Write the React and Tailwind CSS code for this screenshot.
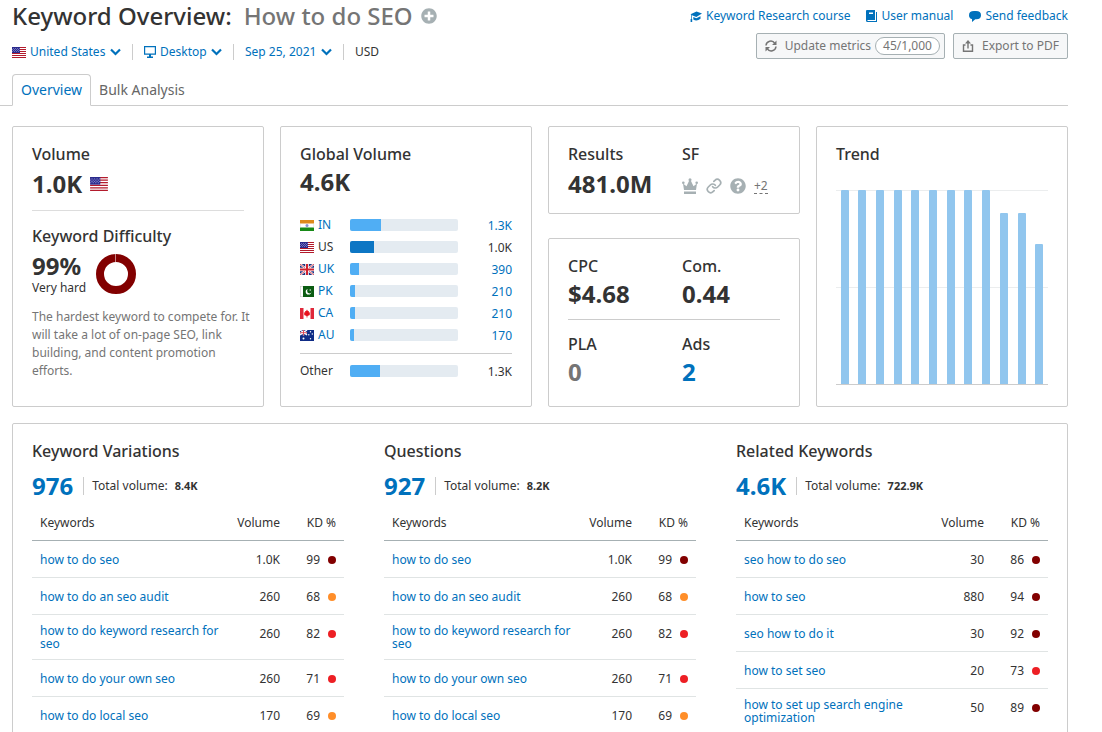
import React from 'react';
import { FaPlusCircle, FaQuestionCircle } from 'react-icons/fa';
import { Link as LinkIcon } from 'lucide-react';

/* Flags, all drawn on a 14 x 11 grid */
const FlagUS = () => (
  <>
    <rect width="14" height="11" fill="#fff" />
    <path d="M0 .5h14M0 2.5h14M0 4.5h14M0 6.5h14M0 8.5h14M0 10.5h14" stroke="#b31b2c" />
    <rect width="8" height="6" fill="#2a2a8c" />
    <path d="M1 1.5h7M0 2.5h7M1 3.5h7M0 4.5h7" stroke="#8f8fd0" strokeWidth=".7" strokeDasharray="1 1" />
  </>
);

const FlagIN = () => (
  <>
    <rect width="14" height="11" fill="#fff" />
    <rect width="14" height="3.5" fill="#dd8a1c" />
    <rect y="7.5" width="14" height="3.5" fill="#178a17" />
    <path d="M.25 3.5v4M13.75 3.5v4" stroke="#ccc" strokeWidth=".5" />
    <circle cx="7" cy="5.5" r="1.5" fill="#8a93cf" />
  </>
);

const FlagUK = () => (
  <>
    <rect width="14" height="11" fill="#1f3480" />
    <path d="M0 0l14 11M14 0L0 11" stroke="#fff" strokeWidth="2" />
    <path d="M0 0l14 11M14 0L0 11" stroke="#d0212f" strokeWidth=".8" />
    <path d="M7 0v11M0 5.5h14" stroke="#fff" strokeWidth="3.6" />
    <path d="M7 0v11M0 5.5h14" stroke="#d0212f" strokeWidth="2" />
  </>
);

const FlagPK = () => (
  <>
    <rect width="14" height="11" fill="#0b5c12" />
    <rect width="3" height="11" fill="#fff" />
    <path d="M0 .3h3M0 10.7h3M.3 0v11" stroke="#bbb" strokeWidth=".6" />
    <circle cx="8.5" cy="5.7" r="2.8" fill="#fff" />
    <circle cx="9.5" cy="5" r="2.4" fill="#0b5c12" />
    <circle cx="10.2" cy="4" r=".7" fill="#fff" />
  </>
);

const FlagCA = () => (
  <>
    <rect width="14" height="11" fill="#fff" />
    <rect width="3.5" height="11" fill="#e0283a" />
    <rect x="10.5" width="3.5" height="11" fill="#e0283a" />
    <path d="M7 1.5l1 1.7 1-.3-.2 1.6 1.4-.1-.6 1.6.3.9-2.5 1v1.6h-.8V7.9l-2.5-1 .3-.9-.6-1.6 1.4.1L5 2.9l1 .3z" fill="#e8101c" />
  </>
);

const FlagAU = () => (
  <>
    <rect width="14" height="11" fill="#0f2c86" />
    <path d="M0 0l7 5M7 0L0 5M3.5 0v5.5M0 2.7h7" stroke="#fff" strokeWidth="1.4" />
    <path d="M3.5 0v5.5M0 2.7h7" stroke="#d8404e" strokeWidth=".9" />
    <g fill="#fff">
      <circle cx="3.5" cy="8.5" r="1" />
      <circle cx="10.5" cy="1.8" r=".7" />
      <circle cx="8.8" cy="4.7" r=".7" />
      <circle cx="12.3" cy="4" r=".7" />
      <circle cx="10.5" cy="8.8" r=".7" />
    </g>
  </>
);

const flags = { US: FlagUS, IN: FlagIN, UK: FlagUK, PK: FlagPK, CA: FlagCA, AU: FlagAU };

const Flag = ({ code, className = 'w-[14px] h-[11px]' }) => {
  const Shape = flags[code];
  return (
    <svg viewBox="0 0 14 11" className={`shrink-0 ${className}`} aria-hidden="true">
      <Shape />
    </svg>
  );
};

const Chevron = () => (
  <svg viewBox="0 0 11 8" className="w-[11px] h-2 ml-1 pointer-events-none" aria-hidden="true">
    <path d="M1 1.5L5.5 6 10 1.5" fill="none" stroke="#0071bc" strokeWidth="2.2" />
  </svg>
);

const Divider = () => <span className="w-px h-4 bg-[#ccc] mx-[11px]"></span>;

const Filter = ({ label, icon, value }) => (
  <span className="flex items-center text-[#0071bc]">
    {icon}
    <select aria-label={label} className="appearance-none bg-transparent cursor-pointer leading-4" defaultValue={value}>
      <option>{value}</option>
    </select>
    <Chevron />
  </span>
);

const TopLinks = () => (
  <nav className="flex items-center gap-4 h-8 text-xs text-[#0071bc]">
    <a href="#course" className="flex items-center gap-1">
      <svg viewBox="0 0 12 12" className="w-3 h-3" aria-hidden="true" fill="#0071bc">
        <path d="M12 3.6L6.500 1.500.5 4.200l.8.500v4.300H.600V12h1.600V9H2V5.200l4.300 1.900z" />
        <path d="M3.300 7l3 1.300 4.200-2.100v2.600Q6.700 11.800 3.300 9.500z" />
      </svg>
      Keyword Research course
    </a>
    <a href="#manual" className="flex items-center gap-1">
      <svg viewBox="0 0 11 12" className="w-[11px] h-3" aria-hidden="true">
        <path d="M1 0h8v10H1.5v1H10V2h1v10H1.5Q0 12 0 10.500V1Q0 0 1 0z" fill="#0071bc" />
        <path d="M3 2.5h4V4H3z" fill="#fff" />
      </svg>
      User manual
    </a>
    <a href="#feedback" className="flex items-center gap-1">
      <svg viewBox="0 0 12 12" className="w-3 h-3" aria-hidden="true">
        <path d="M5 1h2q5 0 5 4.200T7 9.200H6.300L3 12V9Q0 8.500 0 5.200 0 1 5 1z" fill="#0071bc" />
      </svg>
      Send feedback
    </a>
  </nav>
);

const Header = () => (
  <header className="flex justify-between pl-3 pr-[34px]">
    <div>
      <h1 className="flex items-center h-8 text-2xl leading-8 font-medium text-[#333]">
        Keyword Overview:
        <span className="ml-3 text-[#757575]">How to do SEO</span>
        <button type="button" aria-label="Add to list" className="ml-2 text-[#a6b0b3]">
          <FaPlusCircle className="w-4 h-4" />
        </button>
      </h1>
      <div className="flex items-center h-5 mt-[10px] text-xs text-[#333]">
        <Filter label="Country" value="United States" icon={<Flag code="US" className="w-[14px] h-[11px] mr-1" />} />
        <Divider />
        <Filter
          label="Device"
          value="Desktop"
          icon={
            <svg viewBox="0 0 12 12" className="w-3 h-3 mr-1" aria-hidden="true">
              <path d="M.6.6h10.8v7.600H.6z" fill="none" stroke="#0071bc" strokeWidth="1.200" />
              <path d="M5 8h2v2.500h2V12H3v-1.500h2z" fill="#0071bc" />
            </svg>
          }
        />
        <Divider />
        <Filter label="Date" value="Sep 25, 2021" />
        <Divider />
        <span>USD</span>
      </div>
    </div>

    <div className="flex flex-col items-end">
      <TopLinks />
      <div className="flex gap-2 mt-px text-xs text-[#757575]">
        <button type="button" className="flex items-center h-[26px] pl-2 pr-1 rounded-xs border border-[#a6b0b3] bg-[#f6f7f8]">
          <svg viewBox="0 0 12 12" className="w-3 h-3 mr-2" aria-hidden="true">
            <path d="M1 5.5a4.800 4.800 0 0 1 8.800-2.200M11 6.5a4.800 4.800 0 0 1-8.800 2.200" fill="none" stroke="#757575" strokeWidth="1.5" />
            <path d="M11.5.5V5H7zM.5 11.500V7H5z" fill="#757575" />
          </svg>
          Update metrics
          <span className="flex items-center h-[18px] ml-1 px-[7px] rounded-full border border-[#a6b0b3] bg-white">45/1,000</span>
        </button>
        <button type="button" className="flex items-center h-[26px] px-2 rounded-xs border border-[#a6b0b3] bg-[#f6f7f8]">
          <svg viewBox="0 0 12 12" className="w-3 h-3 mr-2" aria-hidden="true">
            <path d="M3.5 5h-2v6.300h9V5h-2M6 8.500V2" fill="none" stroke="#757575" strokeWidth="1.400" />
            <path d="M6 0l3 3.500H3z" fill="#757575" />
          </svg>
          Export to PDF
        </button>
      </div>
    </div>
  </header>
);

const Tabs = () => (
  <div className="flex mt-3 mr-[34px]" role="tablist">
    <span className="w-3 border-b border-[#ccc]"></span>
    <button type="button" role="tab" aria-selected="true" className="h-8 px-2 rounded-t-sm border border-[#ccc] border-b-white text-sm text-[#0071bc]">
      Overview
    </button>
    <button type="button" role="tab" aria-selected="false" className="h-8 px-2 border-b border-[#ccc] text-sm text-[#666]">
      Bulk Analysis
    </button>
    <span className="flex-1 border-b border-[#ccc]"></span>
  </div>
);

const Card = ({ className = '', children }) => (
  <section className={`border border-[#ccc] rounded-xs px-[19px] pt-[18px] ${className}`}>{children}</section>
);

const Title = ({ children }) => <h2 className="text-base leading-[18px] font-medium text-[#333]">{children}</h2>;

const big = 'text-2xl leading-7 font-bold';

const VolumeCard = () => (
  <Card className="pb-6">
    <Title>Volume</Title>
    <div className="flex items-center gap-2 mt-[7px]">
      <span className={big}>1.0K</span>
      <Flag code="US" className="w-[18px] h-[14px]" />
    </div>
    <hr className="mt-3 mb-4 border-[#ddd]" />
    <Title>Keyword Difficulty</Title>
    <div className="flex items-center gap-[10px] mt-[7px]">
      <div>
        <div className={big}>99%</div>
        <div className="leading-4">Very hard</div>
      </div>
      <svg viewBox="0 0 40 40" className="w-10 h-10" aria-hidden="true">
        <circle cx="20" cy="20" r="16" fill="none" stroke="#820000" strokeWidth="8" />
        <path d="M19.500 0v8" stroke="#d9a9a9" strokeWidth=".8" />
      </svg>
    </div>
    <p className="mt-3 -mr-3 leading-[18px] text-[#757575]">
      The hardest keyword to compete for. It will take a lot of on-page SEO, link building, and content promotion efforts.
    </p>
  </Card>
);

const countries = [
  { code: 'IN', value: '1.3K', share: 29 },
  { code: 'US', value: '1.0K', share: 22, current: true },
  { code: 'UK', value: '390', share: 8 },
  { code: 'PK', value: '210', share: 5 },
  { code: 'CA', value: '210', share: 5 },
  { code: 'AU', value: '170', share: 4 },
];

const Bar = ({ share, current }) => (
  <span className="flex h-3 rounded-xs overflow-hidden bg-[#e4ebf1]">
    <span className={current ? 'bg-[#0d76c4]' : 'bg-[#50aef4]'} style={{ width: `${share}%` }}></span>
  </span>
);

const GlobalVolumeCard = () => (
  <Card>
    <Title>Global Volume</Title>
    <div className={`mt-[5px] ${big}`}>4.6K</div>
    <ul className="mt-[18px] text-[#0071bc]">
      {countries.map(({ code, value, share, current }) => (
        <li key={code} className={`grid grid-cols-[50px_1fr_54px] items-center h-[22px] ${current ? 'text-[#333]' : ''}`}>
          <span className="flex items-center gap-1">
            <Flag code={code} />
            {current ? <span>{code}</span> : <a href={`#${code}`}>{code}</a>}
          </span>
          <Bar share={share} current={current} />
          <span className="pt-0.5 text-right">{value}</span>
        </li>
      ))}
    </ul>
    <hr className="mt-[7px] border-[#ccc]" />
    <div className="grid grid-cols-[50px_1fr_54px] items-center h-[22px] mt-[6px]">
      <span>Other</span>
      <Bar share={28} />
      <span className="pt-0.5 text-right">1.3K</span>
    </div>
  </Card>
);

const Stat = ({ title, children }) => (
  <div>
    <Title>{title}</Title>
    {children}
  </div>
);

const CostCards = () => (
  <div className="flex flex-col gap-6">
    <Card className="grid grid-cols-[114px_1fr] pb-[15px]">
      <Stat title="Results">
        <div className={`mt-[7px] ${big}`}>481.0M</div>
      </Stat>
      <Stat title="SF">
        <div className="flex items-end gap-2 h-7 mt-[7px] pb-1 text-[#a6b0b3]">
          <svg viewBox="0 0 16 16" className="w-4 h-4" aria-hidden="true" fill="currentColor">
            <path d="M2 13.5h12V16H2zM2 12L1 5.5l3.500 2.800L7 3h2l2.500 5.300L15 5.500 14 12z" />
            <circle cx="8" cy="1.7" r="1.5" />
            <circle cx="1.3" cy="4.8" r="1.3" />
            <circle cx="14.7" cy="4.8" r="1.3" />
          </svg>
          <LinkIcon className="w-4 h-4" strokeWidth={2.5} />
          <FaQuestionCircle className="w-4 h-4" />
          <button type="button" className="leading-[14px] text-[#757575] border-b border-dashed border-[#757575]">+2</button>
        </div>
      </Stat>
    </Card>

    <Card className="flex-1 pb-5">
      <div className="grid grid-cols-[114px_1fr]">
        <Stat title="CPC">
          <div className={`mt-[5px] ${big}`}>$4.68</div>
        </Stat>
        <Stat title="Com.">
          <div className={`mt-[5px] ${big}`}>0.44</div>
        </Stat>
      </div>
      <hr className="mt-[11px] border-[#ccc]" />
      <div className="grid grid-cols-[114px_1fr] mt-[15px]">
        <Stat title="PLA">
          <div className={`mt-[5px] text-[#757575] ${big}`}>0</div>
        </Stat>
        <Stat title="Ads">
          <a href="#ads" className={`block mt-[5px] text-[#0071bc] ${big}`}>2</a>
        </Stat>
      </div>
    </Card>
  </div>
);

const trend = [194, 194, 194, 194, 194, 194, 194, 194, 194, 171, 171, 140];

const TrendCard = () => (
  <Card>
    <Title>Trend</Title>
    <svg viewBox="0 0 212 195" className="w-full mt-[27px]" role="img" aria-label="Monthly trend">
      <path d="M0 .5h212M0 97.5h212" stroke="#ebedee" />
      {trend.map((h, i) => {
        const x = Math.round(4.8 + i * 17.67);
        return <path key={i} d={`M${x} 194v${1 - h}q0-1 1-1h6q1 0 1 1v${h - 1}z`} fill="#91c6ee" />;
      })}
      <path d="M0 194.5h212" stroke="#ccc" />
    </svg>
  </Card>
);

const dark = 'bg-[#820000]';
const red = 'bg-[#ed1f24]';
const orange = 'bg-[#ff8e29]';

const variations = [
  ['how to do seo', '1.0K', 99, dark],
  ['how to do an seo audit', '260', 68, orange],
  ['how to do keyword research for seo', '260', 82, red],
  ['how to do your own seo', '260', 71, red],
  ['how to do local seo', '170', 69, orange],
];

const related = [
  ['seo how to do seo', '30', 86, dark],
  ['how to seo', '880', 94, dark],
  ['seo how to do it', '30', 92, dark],
  ['how to set seo', '20', 73, red],
  ['how to set up search engine optimization', '50', 89, dark],
];

const KeywordList = ({ title, count, total, rows }) => (
  <div>
    <Title>{title}</Title>
    <div className="flex items-center mt-3">
      <a href="#all" className={`text-[#0071bc] ${big}`}>{count}</a>
      <span className="w-px h-[18px] ml-[10px] mr-2 bg-[#ccc]"></span>
      <span>Total volume:</span>
      <b className="ml-[7px] text-[11px]">{total}</b>
    </div>
    <table className="table-fixed w-full mt-1 border-separate border-spacing-0 leading-[13px]">
      <thead>
        <tr className="h-[37px]">
          <th className="px-2 text-left font-normal border-b border-[#a6b0b3]">Keywords</th>
          <th className="w-[60px] px-2 text-right font-normal border-b border-[#a6b0b3]">Volume</th>
          <th className="w-[56px] px-2 text-right font-normal border-b border-[#a6b0b3] whitespace-nowrap">KD %</th>
        </tr>
      </thead>
      <tbody>
        {rows.map(([keyword, volume, kd, color]) => (
          <tr key={keyword} className="h-[37px]">
            <td className="px-2 py-[9px] border-b border-[#e0e4e4]">
              <a href="#keyword" className="text-[#0071bc]">{keyword}</a>
            </td>
            <td className="px-2 pt-3 align-top text-right border-b border-[#e0e4e4]">{volume}</td>
            <td className="px-2 pt-3 align-top border-b border-[#e0e4e4]">
              <span className="flex items-center justify-end gap-2">
                {kd}
                <span className={`w-2 h-2 rounded-full ${color}`}></span>
              </span>
            </td>
          </tr>
        ))}
      </tbody>
    </table>
  </div>
);

const App = () => {
  return (
    <div className="min-h-screen bg-white font-['Noto_Sans',sans-serif] text-xs text-[#333]">
      <Header />
      <Tabs />

      <main className="pl-3 pr-[34px] pt-5">
        {/* Metrics */}
        <div className="grid grid-cols-4 gap-4">
          <VolumeCard />
          <GlobalVolumeCard />
          <CostCards />
          <TrendCard />
        </div>

        {/* Keyword ideas */}
        <Card className="grid grid-cols-3 gap-10 mt-4 pb-5">
          <KeywordList title="Keyword Variations" count="976" total="8.4K" rows={variations} />
          <KeywordList title="Questions" count="927" total="8.2K" rows={variations} />
          <KeywordList title="Related Keywords" count="4.6K" total="722.9K" rows={related} />
        </Card>
      </main>
    </div>
  );
};

export default App;
